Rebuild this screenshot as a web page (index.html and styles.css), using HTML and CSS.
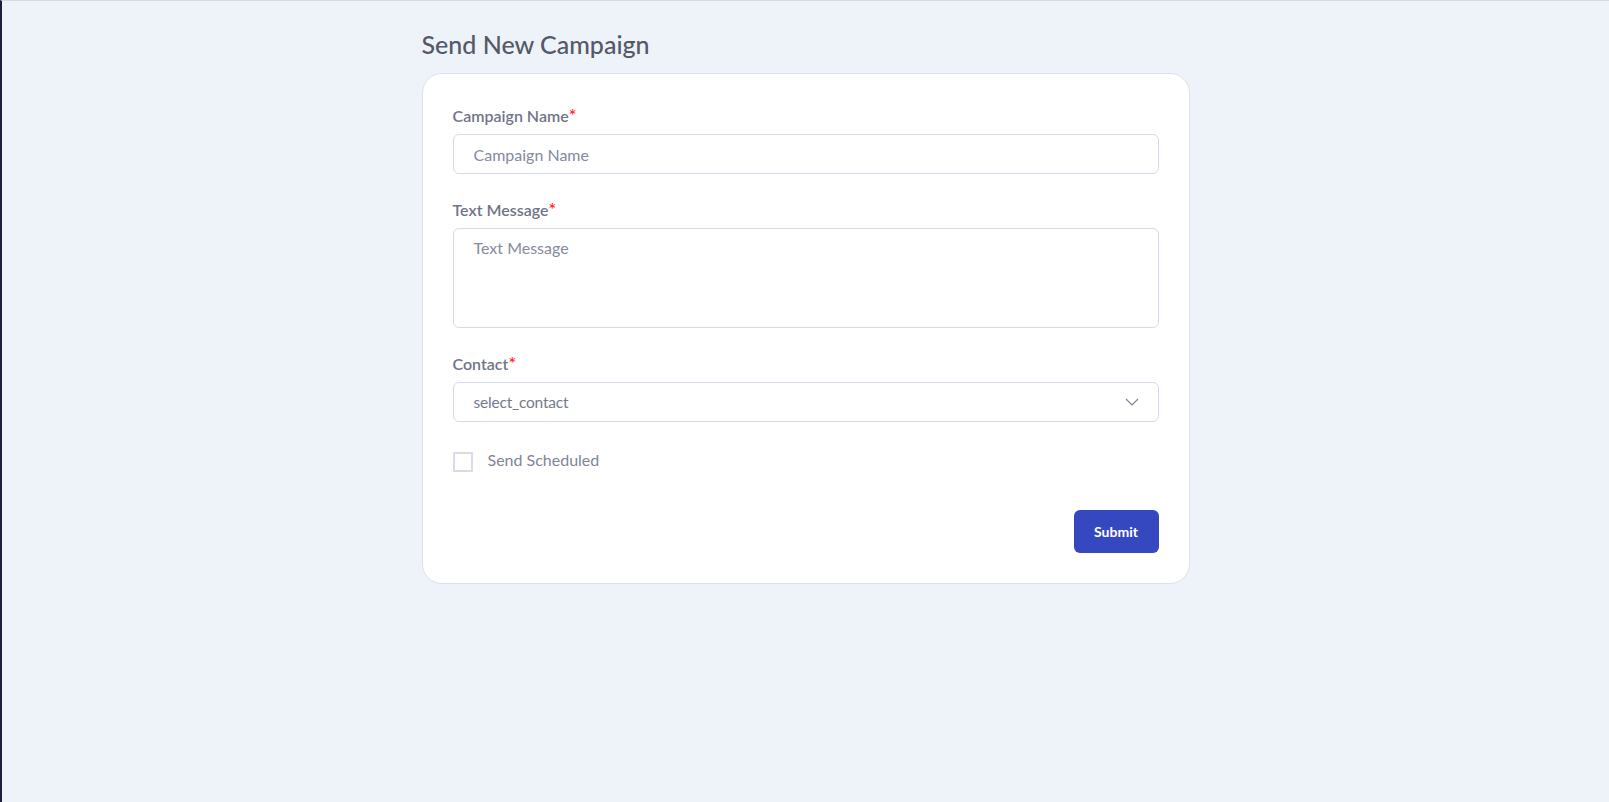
FILE: index.html
```html
<!DOCTYPE html>
<html lang="en">
<head>
<meta charset="utf-8">
<title>Send New Campaign</title>
<link rel="stylesheet" href="styles.css">
</head>
<body>
<main class="page">
  <h1 class="page-title">Send New Campaign</h1>
  <form class="card">
    <div class="field">
      <label class="label">Campaign Name<span class="req">*</span></label>
      <input class="input" type="text" placeholder="Campaign Name">
    </div>
    <div class="field">
      <label class="label">Text Message<span class="req">*</span></label>
      <textarea class="input textarea" placeholder="Text Message"></textarea>
    </div>
    <div class="field">
      <label class="label">Contact<span class="req">*</span></label>
      <div class="select">
        <span class="select-value">select_contact</span>
        <svg class="chevron" width="14" height="8" viewBox="0 0 14 8"><path d="M1 1l6 6 6-6" fill="none" stroke="#7b7f95" stroke-width="1.1"/></svg>
      </div>
    </div>
    <label class="check">
      <span class="check-box"></span>
      <span class="check-text">Send Scheduled</span>
    </label>
    <div class="actions">
      <button class="btn" type="button">Submit</button>
    </div>
  </form>
</main>
</body>
</html>
```
FILE: styles.css
```css
* { box-sizing: border-box; }
html, body { height: 100%; }
body {
  margin: 0;
  background: #eef2f9;
  border-left: 2px solid #1c1f3b;
  border-top: 1px solid #d6dae3;
  font-family: "Lato", "Noto Sans", sans-serif;
  color: #6b6f82;
}
.page {
  width: 768px;
  margin: 0 auto;
  padding-top: 28px;
}
.page-title {
  margin: 0 0 14px;
  font-size: 25px;
  line-height: 30px;
  font-weight: 500;
  color: #545867;
}
.card {
  background: #fff;
  border: 1px solid #dde1ee;
  border-radius: 20px;
  padding: 32px 30px 30px;
  display: flex;
  flex-direction: column;
}
.field {
  display: flex;
  flex-direction: column;
  margin-bottom: 26px;
}
.label {
  font-size: 16px;
  line-height: 20px;
  font-weight: 600;
  color: #707488;
  margin-bottom: 8px;
}
.req { color: #ff2d2d; font-size: 18px; line-height: 0; }
.input {
  height: 40px;
  border: 1px solid #d5daea;
  border-radius: 6px;
  padding: 0 20px;
  font-family: inherit;
  font-size: 16px;
  color: #6b6f82;
  background: #fff;
  outline: none;
}
.input::placeholder { color: #868a9e; }
.textarea {
  height: 100px;
  padding: 9px 20px;
  resize: none;
  line-height: 20px;
}
.select {
  height: 40px;
  border: 1px solid #d5daea;
  border-radius: 6px;
  padding: 0 20px;
  display: flex;
  align-items: center;
  justify-content: space-between;
  font-size: 15.5px;
  color: #757a8e;
}
.select-value { letter-spacing: -0.2px; }
.chevron { margin-right: -1px; }
.check {
  display: flex;
  align-items: center;
  gap: 15px;
  margin-top: 4px;
}
.check-box {
  width: 20px;
  height: 20px;
  border: 2px solid #d8dcea;
  border-radius: 1px;
}
.check-text {
  font-size: 16px;
  color: #81859a;
  margin-top: -6px;
}
.actions {
  display: flex;
  justify-content: flex-end;
  margin-top: 38px;
}
.btn {
  width: 85px;
  height: 43px;
  border: 0;
  border-radius: 6px;
  background: #3548bf;
  color: #fff;
  font-family: inherit;
  font-size: 14px;
  font-weight: 700;
}
```
